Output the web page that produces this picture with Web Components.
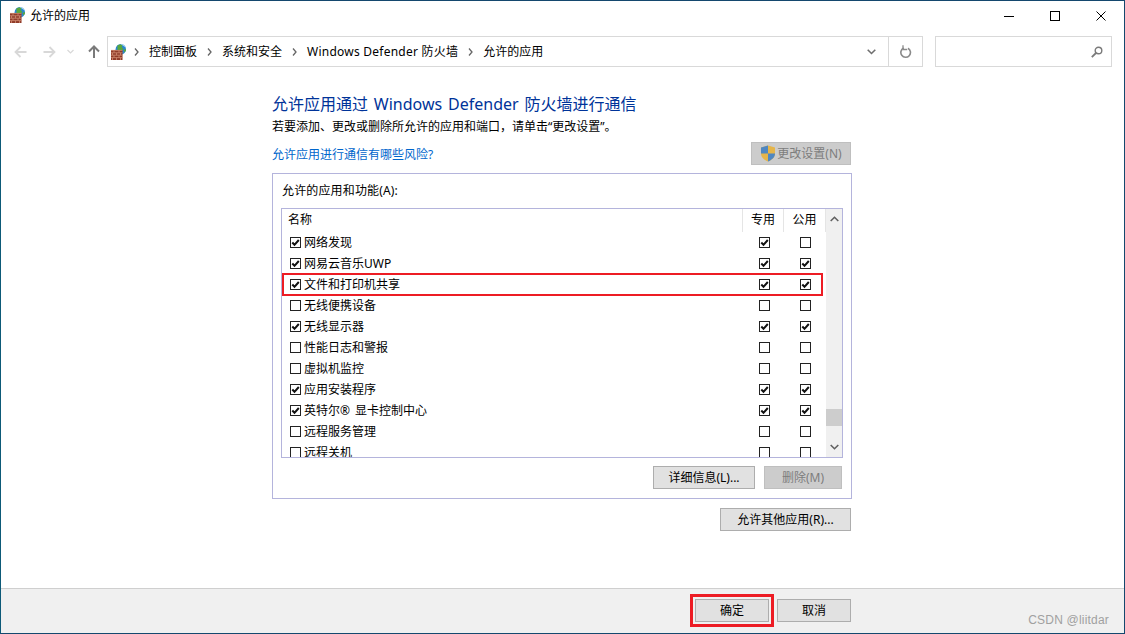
<!DOCTYPE html>
<html lang="zh">
<head>
<meta charset="utf-8">
<title>允许的应用</title>
<style>
    html, body { margin: 0; height: 100%; background: #fff; }
    body { font: 12px/16px "Noto Sans", "Noto Sans CJK SC", sans-serif; color: #000; overflow: hidden; }
</style>
</head>
<body>
<allow-window>
    <title-bar slot="title">允许的应用</title-bar>
    <nav-bar slot="nav"></nav-bar>
    <page-head slot="head"></page-head>
    <allow-group slot="group">
        <app-row label="网络发现" main="1" a="1" b="0"></app-row>
        <app-row label="网易云音乐UWP" main="1" a="1" b="1"></app-row>
        <app-row label="文件和打印机共享" main="1" a="1" b="1" marked></app-row>
        <app-row label="无线便携设备" main="0" a="0" b="0"></app-row>
        <app-row label="无线显示器" main="1" a="1" b="1"></app-row>
        <app-row label="性能日志和警报" main="0" a="0" b="0"></app-row>
        <app-row label="虚拟机监控" main="0" a="0" b="0"></app-row>
        <app-row label="应用安装程序" main="1" a="1" b="1"></app-row>
        <app-row label="英特尔® 显卡控制中心" main="1" a="1" b="1"></app-row>
        <app-row label="远程服务管理" main="0" a="0" b="0"></app-row>
        <app-row label="远程关机" main="0" a="0" b="0"></app-row>
    </allow-group>
    <ui-button slot="other" style="width:131px">允许其他应用(R)...</ui-button>
    <foot-bar slot="foot"></foot-bar>
</allow-window>

<script>
const FW_ICON = `<svg width="16" height="16" viewBox="0 0 16 16" style="display:block" xmlns="http://www.w3.org/2000/svg">
    <circle cx="9.8" cy="5.2" r="5.2" fill="#2b86cf"/>
    <path d="M6.500 1.500c2-1.500 4-1.300 5-.5l-.8 2 1.800 2-2 1.500-4-.5zM12.500 6l2.400-1 .1 1.500-1.300 2z" fill="#58a83a"/>
    <path d="M9.500 0a5.200 5.200 0 0 1 5.300 3.500l-2.300-1.500z" fill="#a8d6ef"/>
    <rect x="0" y="6" width="11.500" height="10" fill="#8f3b29"/>
    <path d="M0 6.400h11.500M0 8.800h11.500M0 11.200h11.500M0 13.600h11.500M3 6.400v2.400M8 6.400v2.400M1.500 8.800v2.400M5.500 8.800v2.400M9.500 8.800v2.400M3 11.200v2.400M8 11.200v2.400M1.500 13.600V16M5.500 13.600V16M9.500 13.600V16" stroke="#cf8a70" stroke-width=".8" fill="none"/>
</svg>`;

class AllowWindow extends HTMLElement {
    constructor() {
        super();
        this.attachShadow({mode: 'open'}).innerHTML = `
            <style>
                :host { display: flex; flex-direction: column; box-sizing: border-box; height: 634px; border: 1px solid #14486e; border-left-color: #0d5a78; background: #fff; }
                .body { flex: 1; display: flex; flex-direction: column; align-items: flex-start; padding: 26px 0 0 271px; }
                .other { align-self: stretch; display: flex; justify-content: flex-start; padding: 9px 0 0 448px; }
            </style>
            <slot name="title"></slot>
            <slot name="nav"></slot>
            <div class="body">
                <slot name="head"></slot>
                <slot name="group"></slot>
                <div class="other"><slot name="other"></slot></div>
            </div>
            <slot name="foot"></slot>
        `;
    }
}
customElements.define('allow-window', AllowWindow);

class TitleBar extends HTMLElement {
    constructor() {
        super();
        this.attachShadow({mode: 'open'}).innerHTML = `
            <style>
                :host { display: flex; align-items: center; height: 30px; padding-left: 9px; flex: none; }
                .ico { width: 16px; height: 16px; margin-right: 4px; margin-top: -2px; }
                .txt { flex: 1; font-size: 12px; }
                .btn { width: 46px; height: 30px; display: flex; align-items: center; justify-content: center; }
                svg { display: block; }
            </style>
            <div class="ico">${FW_ICON}</div>
            <div class="txt"><slot></slot></div>
            <div class="btn"><svg width="10" height="10"><path d="M0 5.500h10" stroke="#000"/></svg></div>
            <div class="btn"><svg width="10" height="10"><rect x=".5" y=".5" width="9" height="9" fill="none" stroke="#000"/></svg></div>
            <div class="btn"><svg width="10" height="10"><path d="M.5.500l9 9M9.500.500l-9 9" stroke="#000" stroke-width="1"/></svg></div>
        `;
    }
}
customElements.define('title-bar', TitleBar);

class NavBar extends HTMLElement {
    constructor() {
        super();
        const crumbs = ['控制面板', '系统和安全', 'Windows Defender 防火墙', '允许的应用'];
        const chev = '<svg class="sep" width="5" height="8"><path d="M1 .5L4 4 1 7.500" fill="none" stroke="#666" stroke-width="1.300"/></svg>';
        this.attachShadow({mode: 'open'}).innerHTML = `
            <style>
                :host { display: flex; align-items: center; height: 31px; margin-top: 5px; padding-left: 13px; flex: none; }
                svg { display: block; flex: none; }
                .arrows { display: flex; align-items: center; width: 93px; }
                .box { box-sizing: border-box; height: 31px; border: 1px solid #d9d9d9; display: flex; align-items: center; }
                .addr { width: 816px; padding-left: 3px; }
                .crumb { margin: 0 10px; white-space: nowrap; }
                .wide { letter-spacing: .24px; }
                .fill { flex: 1; }
                .drop { width: 34px; display: flex; justify-content: center; }
                .ref { width: 33px; height: 29px; border-left: 1px solid #d9d9d9; display: flex; align-items: center; justify-content: center; }
                .search { width: 177px; margin-left: 12px; justify-content: flex-end; padding-right: 8px; }
            </style>
            <div class="arrows">
                <svg width="13" height="12" style="margin-right:16px"><path d="M12.500 6H1.500M6.500 1l-5 5 5 5" fill="none" stroke="#d8d8d8" stroke-width="1.800"/></svg>
                <svg width="13" height="12" style="margin-right:11px"><path d="M.5 6h11M6.500 1l5 5-5 5" fill="none" stroke="#d8d8d8" stroke-width="1.800"/></svg>
                <svg width="7" height="5" style="margin-right:14px"><path d="M.5 1L3.500 4 6.500 1" fill="none" stroke="#d8d8d8" stroke-width="1.200"/></svg>
                <svg width="12" height="13"><path d="M6 13V1.800M1 6.500l5-5 5 5" fill="none" stroke="#7a7a7a" stroke-width="2"/></svg>
            </div>
            <div class="box addr">
                <span style="margin-right:7px">${FW_ICON}</span>
                ${crumbs.map((c) => `${chev}<span class="crumb${/W/.test(c) ? ' wide' : ''}">${c}</span>`).join('')}
                <span class="fill"></span>
                <span class="drop"><svg width="9" height="6"><path d="M.7.800L4.500 4.500 8.300.800" fill="none" stroke="#6f6f6f" stroke-width="1.600"/></svg></span>
                <span class="ref"><svg width="12" height="14" viewBox="0 0 12 14"><path d="M8 3.300a4.800 4.800 0 1 1-4.300-.2" fill="none" stroke="#8a8a8a" stroke-width="1.600"/><path d="M3 .3v4.200h4.200" fill="none" stroke="#8a8a8a" stroke-width="1.300"/></svg></span>
            </div>
            <div class="box search">
                <svg width="12" height="12" viewBox="0 0 12 12"><circle cx="7.500" cy="4.500" r="3.300" fill="none" stroke="#7a7a7a" stroke-width="1.400"/><path d="M5 7L.8 11.200" stroke="#7a7a7a" stroke-width="1.800"/></svg>
            </div>
        `;
    }
}
customElements.define('nav-bar', NavBar);

class UiButton extends HTMLElement {
    constructor() {
        super();
        this.attachShadow({mode: 'open'}).innerHTML = `
            <style>
                :host { display: flex; align-items: center; justify-content: center; gap: 1px; box-sizing: border-box; height: 23px; border: 1px solid #adadad; background: #e1e1e1; color: #000; font-size: 12px; white-space: nowrap; flex: none; }
                :host([disabled]) { background: #cccccc; border-color: #bfbfbf; color: #7d7d7d; }
            </style>
            <slot></slot>
        `;
    }
}
customElements.define('ui-button', UiButton);

class PageHead extends HTMLElement {
    constructor() {
        super();
        this.attachShadow({mode: 'open'}).innerHTML = `
            <style>
                :host { display: block; width: 580px; flex: none; }
                h1 { margin: 0; font-size: 16px; line-height: 22px; font-weight: 400; color: #003399; white-space: nowrap; word-spacing: 1.7px; }
                p { margin: 4px 0 0; line-height: 16px; white-space: nowrap; }
                .line { display: flex; justify-content: space-between; align-items: center; margin-top: 6px; height: 25px; }
                .link { color: #0066cc; padding-top: 2px; }
                svg { display: block; }
            </style>
            <h1>允许应用通过 Windows Defender 防火墙进行通信</h1>
            <p>若要添加、更改或删除所允许的应用和端口，请单击“更改设置”。</p>
            <div class="line">
                <span class="link">允许应用进行通信有哪些风险?</span>
                <ui-button disabled style="width:100px;margin-right:1px">
                    <svg width="16" height="17" viewBox="0 0 16 17"><path d="M8 .5l7 2v6c0 4-3.500 6.500-7 8-3.500-1.500-7-4-7-8v-6z" fill="#e5b54a"/><path d="M8 .5v8H1v-6zM8 8.500h7c0 4-3.500 6.500-7 8z" fill="#4f87c2"/></svg>
                    <span>更改设置(N)</span>
                </ui-button>
            </div>
        `;
    }
}
customElements.define('page-head', PageHead);

class AllowGroup extends HTMLElement {
    constructor() {
        super();
        this.attachShadow({mode: 'open'}).innerHTML = `
            <style>
                :host { display: block; box-sizing: border-box; width: 580px; height: 326px; margin-top: 7px; border: 1px solid #b4b4dc; padding: 9px 8px 0; flex: none; }
                .cap { line-height: 16px; padding-left: 1px; letter-spacing: .15px; }
                .list { box-sizing: border-box; width: 562px; height: 250px; margin-top: 9px; border: 1px solid #b4b4dc; display: flex; overflow: hidden; }
                .main { flex: 1; min-width: 0; overflow: hidden; }
                .hdr { display: flex; height: 23px; align-items: flex-start; }
                .hdr div { box-sizing: border-box; height: 23px; line-height: 21px; border-right: 1px solid #e5e5e5; }
                .name { flex: 1; padding-left: 6px; }
                .col { width: 41px; text-align: center; }
                .col.last { width: 42px; }
                .bar { width: 16px; background: #f0f0f0; display: flex; flex-direction: column; align-items: center; flex: none; }
                .bar svg { display: block; margin-top: 7px; }
                .thumb { width: 100%; height: 17px; background: #cdcdcd; margin-top: 187px; }
                .down { margin-top: 18px !important; }
                .btns { display: flex; justify-content: flex-end; gap: 9px; margin-top: 8px; padding-right: 1px; }
            </style>
            <div class="cap">允许的应用和功能(A):</div>
            <div class="list">
                <div class="main">
                    <div class="hdr">
                        <div class="name">名称</div>
                        <div class="col">专用</div>
                        <div class="col last">公用</div>
                    </div>
                    <slot></slot>
                </div>
                <div class="bar">
                    <svg width="9" height="6"><path d="M.7 5L4.500 1.300 8.300 5" fill="none" stroke="#606060" stroke-width="1.600"/></svg>
                    <div class="thumb"></div>
                    <svg class="down" width="9" height="6"><path d="M.7 1L4.500 4.700 8.300 1" fill="none" stroke="#606060" stroke-width="1.600"/></svg>
                </div>
            </div>
            <div class="btns">
                <ui-button style="width:102px">详细信息(L)...</ui-button>
                <ui-button disabled style="width:78px">删除(M)</ui-button>
            </div>
        `;
    }
}
customElements.define('allow-group', AllowGroup);

class AppCheck extends HTMLElement {
    static get observedAttributes() { return ['on']; }
    constructor() {
        super();
        this.attachShadow({mode: 'open'}).innerHTML = `
            <style>
                :host { display: block; width: 11px; height: 11px; flex: none; }
                svg { display: block; }
            </style>
            <svg width="11" height="11"><rect x=".5" y=".5" width="10" height="10" fill="#fff" stroke="#222"/><path d="M2.300 5.500l2.200 2.300 4.300-4.800" fill="none" stroke="#111" stroke-width="2"/></svg>
        `;
    }
    attributeChangedCallback() {
        this.shadowRoot.querySelector('path').style.display = this.getAttribute('on') === '1' ? '' : 'none';
    }
}
customElements.define('app-check', AppCheck);

class AppRow extends HTMLElement {
    constructor() {
        super();
        this.attachShadow({mode: 'open'}).innerHTML = `
            <style>
                :host { display: block; height: 21px; flex: none; }
                .row { display: flex; align-items: center; height: 21px; padding-left: 7px; box-sizing: border-box; width: 539px; margin-left: 1px; }
                :host([marked]) .row { outline: 2px solid #ed1c24; outline-offset: -1px; }
                .name { flex: 1; margin-left: 3px; white-space: nowrap; word-spacing: 2px; }
                .slot { width: 41px; display: flex; justify-content: center; margin-right: 4px; }
                .slot.last { width: 33px; margin-right: 0; }
            </style>
            <div class="row">
                <app-check class="main"></app-check>
                <span class="name"></span>
                <span class="slot"><app-check class="a"></app-check></span>
                <span class="slot last"><app-check class="b"></app-check></span>
            </div>
        `;
    }
    connectedCallback() {
        const root = this.shadowRoot;
        root.querySelector('.name').textContent = this.getAttribute('label');
        root.querySelector('.main').setAttribute('on', this.getAttribute('main'));
        root.querySelector('.a').setAttribute('on', this.getAttribute('a'));
        root.querySelector('.b').setAttribute('on', this.getAttribute('b'));
    }
}
customElements.define('app-row', AppRow);

class FootBar extends HTMLElement {
    constructor() {
        super();
        this.attachShadow({mode: 'open'}).innerHTML = `
            <style>
                :host { display: flex; align-items: flex-start; height: 45px; border-top: 1px solid #cfcfcf; background: #f0f0f0; padding: 10px 0 0 694px; box-sizing: border-box; flex: none; position: relative; }
                .ok { outline: 3px solid #ed1c24; outline-offset: 2px; }
                .mark { position: absolute; right: 15px; top: 23px; font: 12px/16px "Liberation Sans", sans-serif; letter-spacing: .2px; color: #a0a0a0; }
            </style>
            <ui-button class="ok" style="width:74px">确定</ui-button>
            <ui-button style="width:74px;margin-left:8px">取消</ui-button>
            <span class="mark">CSDN @liitdar</span>
        `;
    }
}
customElements.define('foot-bar', FootBar);
</script>
</body>
</html>
